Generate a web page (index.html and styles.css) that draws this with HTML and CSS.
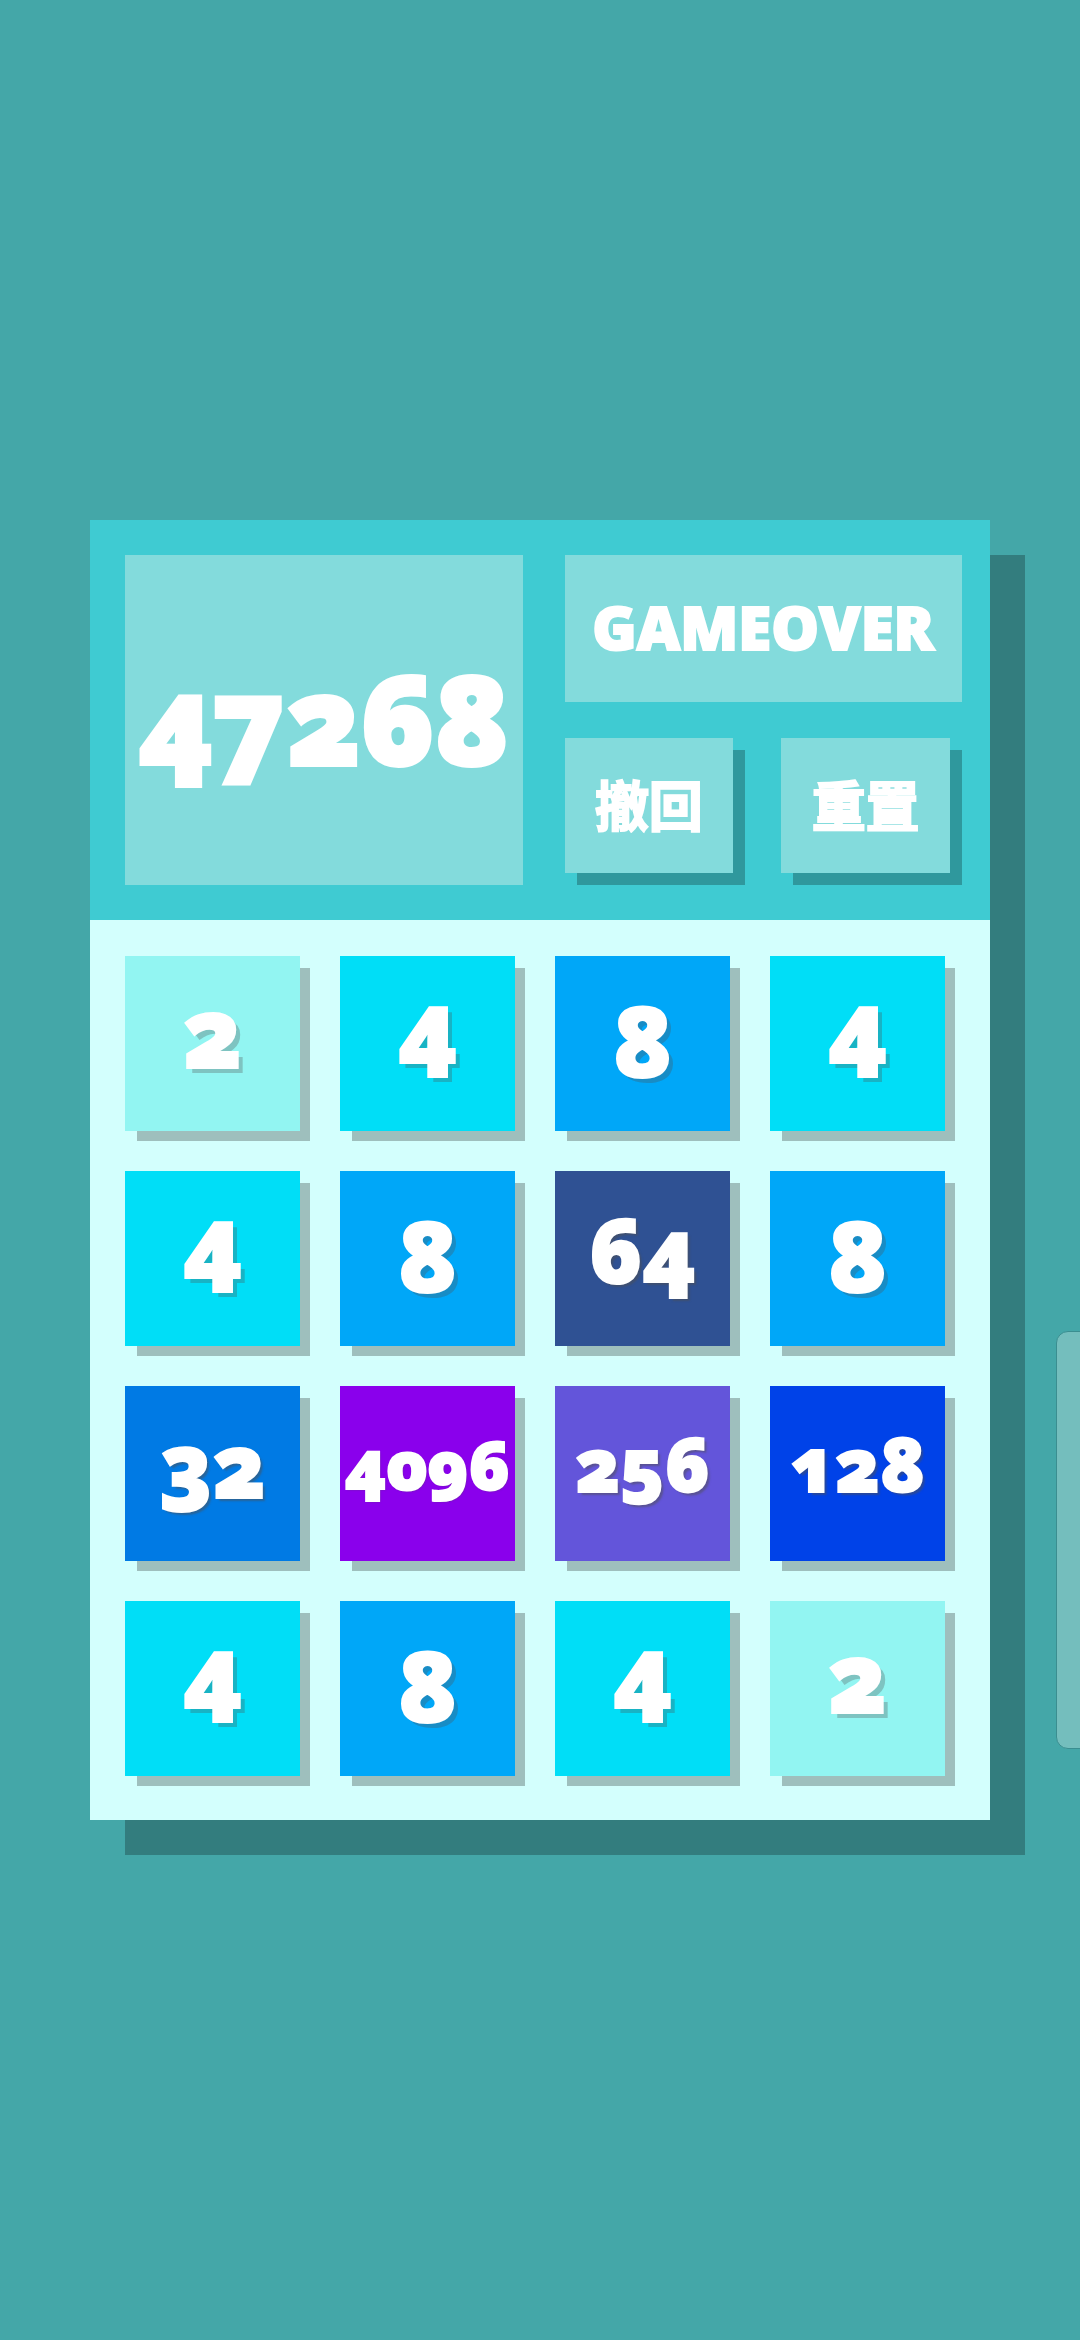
FILE: index.html
```html
<!DOCTYPE html>
<html lang="zh-CN">
<head>
<meta charset="utf-8">
<meta name="viewport" content="width=device-width, initial-scale=1">
<title>2048</title>
<link rel="stylesheet" href="styles.css">
</head>
<body>
<main class="game">
  <header class="panel">
    <output class="score">47268</output>
    <div class="side">
      <p class="status">GAMEOVER</p>
      <div class="actions">
        <button class="action" type="button">撤回</button>
        <button class="action" type="button">重置</button>
      </div>
    </div>
  </header>
  <section class="board">
    <div class="tile v2">2</div>
    <div class="tile v4">4</div>
    <div class="tile v8">8</div>
    <div class="tile v4">4</div>
    <div class="tile v4">4</div>
    <div class="tile v8">8</div>
    <div class="tile two v64">64</div>
    <div class="tile v8">8</div>
    <div class="tile two v32">32</div>
    <div class="tile four v4096">4096</div>
    <div class="tile three v256">256</div>
    <div class="tile three v128">128</div>
    <div class="tile v4">4</div>
    <div class="tile v8">8</div>
    <div class="tile v4">4</div>
    <div class="tile v2">2</div>
  </section>
</main>
<div class="edge-handle"></div>
</body>
</html>
```
FILE: styles.css
```css
* {
  box-sizing: border-box;
}

body {
  margin: 0;
  min-height: 100vh;
  display: flex;
  align-items: center;
  justify-content: center;
  overflow: hidden;
  background: #44a7a8;
  color: #fff;
  font-family: "Open Sans", "Noto Sans", "Noto Sans CJK SC", sans-serif;
  font-weight: 800;
  font-variant-numeric: oldstyle-nums;
  line-height: 1;
  -webkit-text-stroke: 2px #fff;
}

.game {
  width: calc(100% - 180px);
  box-shadow: 35px 35px 0 rgba(0, 0, 0, 0.25);
}

.panel {
  display: grid;
  grid-template-columns: 1fr 1fr;
  gap: 42px;
  padding: 35px 28px 35px 35px;
  background: #3fcbd2;
}

.score,
.status,
.action {
  display: flex;
  align-items: center;
  justify-content: center;
  margin: 0;
  padding: 0 0 4px;
  background: #83dbdc;
}

.score {
  font-size: 122px;
  -webkit-text-stroke: 4px #fff;
}

.side {
  display: grid;
  gap: 36px;
}

.status {
  height: 147px;
  font-size: 60px;
}

.actions {
  display: grid;
  grid-template-columns: 1fr 1fr;
  gap: 48px;
  padding: 0 12px 12px 0;
}

.action {
  height: 135px;
  border: 0;
  color: inherit;
  font: 700 54px/1 "Noto Sans CJK SC", sans-serif;
  -webkit-text-stroke: 2px #fff;
  box-shadow: 12px 12px 0 rgba(0, 0, 0, 0.25);
}

.board {
  display: grid;
  grid-template-columns: repeat(4, 1fr);
  gap: 40px;
  padding: 36px 45px 44px 35px;
  background: #d3fffd;
}

.tile {
  display: flex;
  align-items: center;
  justify-content: center;
  aspect-ratio: 1;
  min-width: 0;
  padding-bottom: 10px;
  font-size: 98px;
  font-variant-numeric: lining-nums;
  text-shadow: 5px 5px 0 rgba(80, 80, 80, 0.3);
  box-shadow: 11px 11px 0 -1px rgba(0, 0, 0, 0.25);
}

.two,
.three,
.four {
  padding-bottom: 20px;
  font-variant-numeric: oldstyle-nums;
  text-shadow: 3px 3px 2px rgba(80, 80, 80, 0.5);
}

.two {
  font-size: 88px;
}

.three {
  font-size: 74px;
}

.four {
  font-size: 68px;
  text-shadow: 1px 1px 2px rgba(80, 80, 80, 0.5);
}

.v2 {
  padding-bottom: 28px;
  background: #92f5f2;
  font-variant-numeric: oldstyle-nums;
}

.v4 { background: #00def7; }
.v8 { background: #00a7f8; }
.v32 { background: #007ae4; }
.v64 { background: #2f5193; }
.v128 { background: #0042e8; }
.v256 { background: #6355da; }
.v4096 { background: #8a00ec; }

/* Pull-out handle that floats at the screen's right edge */
.edge-handle {
  position: fixed;
  top: 1331px;
  right: -12px;
  width: 36px;
  height: 418px;
  border: 1px solid #3b8e90;
  border-radius: 12px;
  background: #74bebd;
}
```
